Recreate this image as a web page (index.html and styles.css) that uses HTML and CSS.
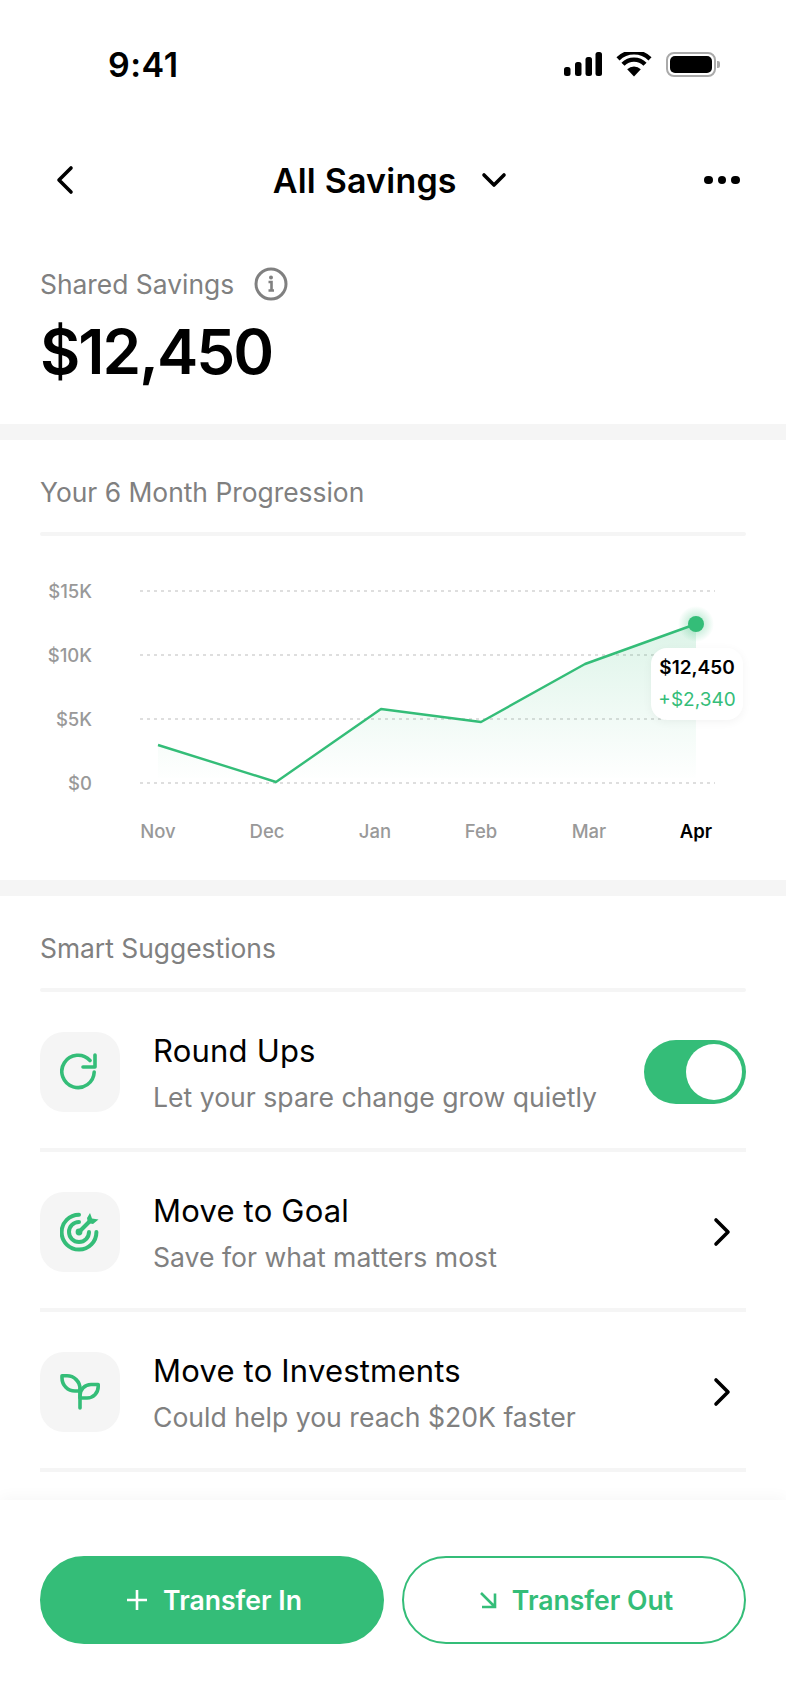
FILE: index.html
```html
<!DOCTYPE html>
<html lang="en">
<head>
    <meta charset="UTF-8">
    <meta name="viewport" content="width=device-width, initial-scale=1.0">
    <title>All Savings</title>
    <link rel="stylesheet" href="styles.css">
</head>
<body>
    <div class="phone">
        <div class="status-bar">
            <span class="time">9:41</span>
            <div class="status-icons">
                <svg width="38" height="24" viewBox="0 0 38 24"><rect x="0" y="15" width="6.5" height="9" rx="2.5"/><rect x="11" y="10" width="6.5" height="14" rx="2.5"/><rect x="21.5" y="5" width="6.5" height="19" rx="2.5"/><rect x="31.5" y="0" width="6.5" height="24" rx="2.5"/></svg>
                <svg class="wifi" width="36" height="25" viewBox="0 0 36 25"><path d="M18 24.5 L11.2 17.2 A10 10 0 0 1 24.8 17.2 Z"/><path class="wifi-arc" d="M7 12.2 A15.5 15.5 0 0 1 29 12.2"/><path class="wifi-arc" d="M2 6.8 A23 23 0 0 1 34 6.8"/></svg>
                <div class="battery"><div class="battery-level"></div></div>
            </div>
        </div>

        <div class="nav">
            <svg class="icon-line" width="20" height="30" viewBox="0 0 20 30"><path d="M16 3 L4 15 L16 27"/></svg>
            <div class="nav-title">
                <span>All Savings</span>
                <svg class="icon-line" width="26" height="16" viewBox="0 0 26 16"><path d="M3 3 L13 13 L23 3"/></svg>
            </div>
            <div class="dots"><i></i><i></i><i></i></div>
        </div>

        <div class="balance">
            <div class="balance-label">
                <span>Shared Savings</span>
                <svg width="34" height="34" viewBox="0 0 34 34"><circle cx="17" cy="17" r="15" fill="none" stroke="#808080" stroke-width="3"/><circle cx="17" cy="10.5" r="2" fill="#808080"/><path d="M14.5 15 H17.5 V23 M14.5 23.5 H20" fill="none" stroke="#808080" stroke-width="2.6"/></svg>
            </div>
            <div class="balance-amount">$12,450</div>
        </div>

        <div class="band"></div>

        <div class="section">
            <div class="section-title">Your 6 Month Progression</div>
            <div class="rule"></div>
        </div>

        <div class="chart">
            <svg width="786" height="344" viewBox="0 536 786 344">
                <defs>
                    <linearGradient id="area" x1="0" y1="0" x2="0" y2="1">
                        <stop offset="0" stop-color="#34bd78" stop-opacity="0.17"/>
                        <stop offset="1" stop-color="#34bd78" stop-opacity="0"/>
                    </linearGradient>
                    <radialGradient id="glow">
                        <stop offset="0.4" stop-color="#34bd78" stop-opacity="0.25"/>
                        <stop offset="1" stop-color="#34bd78" stop-opacity="0"/>
                    </radialGradient>
                </defs>
                <path class="grid" d="M140 591 H715 M140 655 H715 M140 719 H715 M140 783 H715"/>
                <path fill="url(#area)" d="M158 745 L276 782 L381 709 L481 722 L585 664 L696 624 V778 H158 Z"/>
                <path class="trend" d="M158 745 L276 782 L381 709 L481 722 L585 664 L696 624"/>
                <circle cx="696" cy="624" r="18" fill="url(#glow)"/>
                <circle cx="696" cy="624" r="8" fill="#34bd78"/>
                <text class="axis" x="92" y="597.5" text-anchor="end">$15K</text>
                <text class="axis" x="92" y="661.5" text-anchor="end">$10K</text>
                <text class="axis" x="92" y="725.5" text-anchor="end">$5K</text>
                <text class="axis" x="92" y="789.5" text-anchor="end">$0</text>
                <text class="axis" x="158" y="838" text-anchor="middle">Nov</text>
                <text class="axis" x="267" y="838" text-anchor="middle">Dec</text>
                <text class="axis" x="375" y="838" text-anchor="middle">Jan</text>
                <text class="axis" x="481" y="838" text-anchor="middle">Feb</text>
                <text class="axis" x="589" y="838" text-anchor="middle">Mar</text>
                <text class="axis current" x="696" y="838" text-anchor="middle">Apr</text>
            </svg>
            <div class="tooltip">
                <div class="tooltip-value">$12,450</div>
                <div class="tooltip-change">+$2,340</div>
            </div>
        </div>

        <div class="band"></div>

        <div class="section">
            <div class="section-title">Smart Suggestions</div>
            <div class="rule"></div>
        </div>

        <div class="rows">
            <div class="row">
                <div class="tile">
                    <svg class="icon-green" width="40" height="40" viewBox="0 0 40 40"><path d="M34.2 20 A16.2 16.2 0 1 1 30 8.5"/><path d="M35 3 V15 H23"/></svg>
                </div>
                <div class="row-text">
                    <div class="row-title">Round Ups</div>
                    <div class="row-sub">Let your spare change grow quietly</div>
                </div>
                <div class="toggle"><div class="knob"></div></div>
            </div>
            <div class="row">
                <div class="tile">
                    <svg class="icon-green icon-target" width="40" height="40" viewBox="0 0 40 40"><path d="M19 2.8 A17.4 17.4 0 1 0 36.4 20"/><path d="M19 10 A10 10 0 1 0 29 20"/><path d="M19 20 L30 9"/><circle class="solid" cx="19" cy="20" r="3.4"/><path class="solid" d="M27 6 L30 1 L32 6.5 L38.5 7.5 L33 12 L28 11 Z"/></svg>
                </div>
                <div class="row-text">
                    <div class="row-title">Move to Goal</div>
                    <div class="row-sub">Save for what matters most</div>
                </div>
                <svg class="icon-line chevron" width="20" height="30" viewBox="0 0 20 30"><path d="M4 3 L16 15 L4 27"/></svg>
            </div>
            <div class="row">
                <div class="tile">
                    <svg class="icon-green" width="40" height="40" viewBox="0 0 40 40"><path d="M2 3.8 H7 A13 13 0 0 1 20 16.8 V19 H15 A13 13 0 0 1 2 6 Z"/><path d="M38.2 12.5 H31 A11 11 0 0 0 20 23.5 V26 H27 A11.2 11.2 0 0 0 38.2 14.8 Z"/><path d="M20 17 V36"/></svg>
                </div>
                <div class="row-text">
                    <div class="row-title">Move to Investments</div>
                    <div class="row-sub">Could help you reach $20K faster</div>
                </div>
                <svg class="icon-line chevron" width="20" height="30" viewBox="0 0 20 30"><path d="M4 3 L16 15 L4 27"/></svg>
            </div>
        </div>

        <div class="actions">
            <button class="btn btn-fill">
                <svg width="22" height="22" viewBox="0 0 22 22"><path d="M11 1 V21 M1 11 H21"/></svg>
                Transfer In
            </button>
            <button class="btn btn-outline">
                <svg width="18" height="18" viewBox="0 0 18 18"><path d="M2 2 L15.5 15.5 M3 16 H16 V2.5"/></svg>
                Transfer Out
            </button>
        </div>
    </div>
</body>
</html>
```

FILE: styles.css
```css
* {
    box-sizing: border-box;
}
body {
    font-family: Inter, "Open Sans", sans-serif;
    background-color: #fff;
    color: #000;
    margin: 0;
}
.phone {
    width: 786px;
    height: 1704px;
    overflow: hidden;
    display: flex;
    flex-direction: column;
}

/* status bar */
.status-bar {
    height: 128px;
    padding: 0 70px 0 108px;
    display: flex;
    justify-content: space-between;
    align-items: center;
}
.time {
    font-size: 34px;
    font-weight: 600;
    letter-spacing: 0.5px;
    margin-top: 1px;
}
.status-icons {
    display: flex;
    align-items: center;
    gap: 14px;
}
.wifi-arc {
    fill: none;
    stroke: #000;
    stroke-width: 4.4;
}
.battery {
    width: 50px;
    height: 25px;
    border: 2px solid #aaa;
    border-radius: 8px;
    padding: 2px;
    position: relative;
}
.battery::after {
    content: "";
    position: absolute;
    right: -6px;
    top: 7px;
    width: 3px;
    height: 7px;
    background: #aaa;
    border-radius: 0 2px 2px 0;
}
.battery-level {
    height: 100%;
    background: #000;
    border-radius: 5px;
}

/* nav */
.nav {
    height: 104px;
    padding: 0 46px 0 55px;
    display: flex;
    justify-content: space-between;
    align-items: center;
}
.nav-title {
    display: flex;
    align-items: center;
    gap: 24px;
    font-size: 34px;
    font-weight: 600;
    letter-spacing: 0.2px;
}
.icon-line {
    fill: none;
    stroke: #000;
    stroke-width: 3.6;
    stroke-linecap: round;
    stroke-linejoin: round;
}
.dots {
    display: flex;
    gap: 5px;
}
.dots i {
    width: 8.5px;
    height: 8.5px;
    border-radius: 50%;
    background: #000;
}

/* balance */
.balance {
    height: 192px;
    padding: 33px 40px 0;
}
.balance-label {
    display: flex;
    align-items: center;
    gap: 20px;
    height: 38px;
    font-size: 26.4px;
    color: #808080;
}
.balance-amount {
    font-size: 62px;
    font-weight: 600;
    line-height: 80px;
    margin-top: 9px;
    letter-spacing: -2px;
}
.band {
    height: 16px;
    flex: none;
    background: #f5f5f5;
}

/* sections */
.section {
    padding: 0 40px;
}
.section-title {
    height: 92px;
    padding-top: 12px;
    display: flex;
    align-items: center;
    font-size: 26.4px;
    color: #808080;
}
.rule {
    height: 4px;
    background: #f5f5f5;
    border-radius: 2px;
}

/* chart */
.chart {
    height: 344px;
    position: relative;
}
.chart svg {
    display: block;
}
.grid {
    fill: none;
    stroke: #dedede;
    stroke-width: 2;
    stroke-dasharray: 3 4;
}
.trend {
    fill: none;
    stroke: #34bd78;
    stroke-width: 2.4;
    stroke-linejoin: round;
}
.axis {
    font-size: 18.5px;
    font-weight: 500;
    fill: #999;
}
.axis.current {
    fill: #000;
    font-weight: 600;
}
.tooltip {
    position: absolute;
    left: 651px;
    top: 112px;
    width: 92px;
    height: 72px;
    background: #fff;
    border-radius: 16px;
    box-shadow: 0 2px 10px rgba(0, 0, 0, 0.05);
    display: flex;
    flex-direction: column;
    align-items: center;
    justify-content: center;
    gap: 10px;
    font-size: 19px;
    line-height: 22px;
}
.tooltip-value {
    font-weight: 600;
}
.tooltip-change {
    color: #34bd78;
}

/* suggestion rows */
.rows {
    padding: 0 40px;
    flex: 1;
}
.row {
    height: 160px;
    padding-top: 40px;
    display: flex;
    align-items: flex-start;
    border-bottom: 4px solid #f5f5f5;
}
.tile {
    width: 80px;
    height: 80px;
    flex: none;
    background: #f5f5f5;
    border-radius: 24px;
    display: flex;
    align-items: center;
    justify-content: center;
}
.icon-green {
    fill: none;
    stroke: #34bd78;
    stroke-width: 3.6;
    stroke-linecap: round;
    stroke-linejoin: round;
}
.icon-green.icon-target {
    stroke-width: 4;
}
.icon-green .solid {
    fill: #34bd78;
    stroke: none;
}
.row-text {
    flex: 1;
    margin-left: 33px;
}
.row-title {
    font-size: 31px;
    line-height: 38px;
    letter-spacing: 0.2px;
}
.row-sub {
    font-size: 26.6px;
    line-height: 36px;
    color: #808080;
    margin-top: 9px;
}
.toggle {
    width: 102px;
    height: 64px;
    margin-top: 8px;
    background: #34bd78;
    border-radius: 32px;
    padding: 4px;
    display: flex;
    justify-content: flex-end;
}
.knob {
    width: 56px;
    height: 56px;
    border-radius: 50%;
    background: #fff;
}
.chevron {
    margin: 25px 14px 0 0;
}

/* bottom actions */
.actions {
    height: 204px;
    flex: none;
    padding: 56px 40px 0;
    display: flex;
    gap: 18px;
    background: #fff;
    box-shadow: 0 -3px 14px rgba(0, 0, 0, 0.035);
}
.btn {
    flex: 1;
    height: 88px;
    border-radius: 44px;
    border: 2px solid #34bd78;
    font-family: inherit;
    font-size: 26.6px;
    font-weight: 600;
    display: flex;
    align-items: center;
    justify-content: center;
    gap: 15px;
}
.btn svg {
    fill: none;
    stroke-width: 2.6;
}
.btn-fill {
    background: #34bd78;
    color: #fff;
    padding-left: 10px;
}
.btn-fill svg {
    stroke: #fff;
}
.btn-outline {
    background: #fff;
    color: #34bd78;
    padding-left: 10px;
}
.btn-outline svg {
    stroke: #34bd78;
}
```
